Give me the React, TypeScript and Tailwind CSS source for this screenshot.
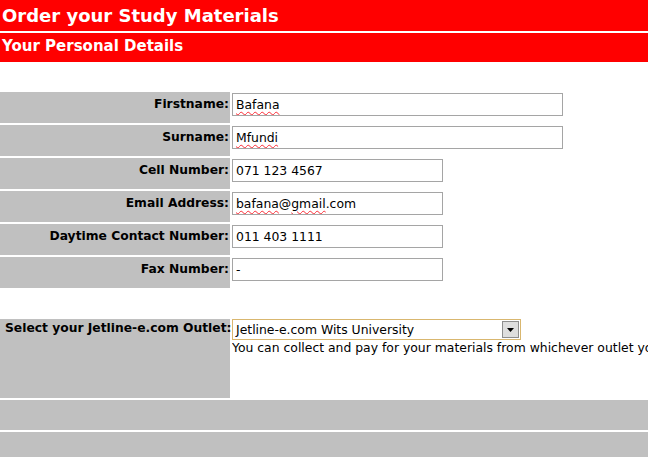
import React from "react";

const font = { fontFamily: '"DejaVu Sans", Verdana, sans-serif' };

function Squiggle({ children }: { children: React.ReactNode }) {
  return (
    <span className="underline decoration-wavy decoration-red-500 decoration-1 underline-offset-2">
      {children}
    </span>
  );
}

function Field({ wide, children }: { wide?: boolean; children: React.ReactNode }) {
  return (
    <div
      className={`h-[23px] ${wide ? "w-[331px]" : "w-[211px]"} border border-[#a5a5a5] bg-white px-[3px] text-[12.4px] leading-[21px] text-black whitespace-nowrap overflow-hidden`}
    >
      {children}
    </div>
  );
}

const rows: { label: string; wide?: boolean; value: React.ReactNode }[] = [
  { label: "Firstname:", wide: true, value: <Squiggle>Bafana</Squiggle> },
  { label: "Surname:", wide: true, value: <Squiggle>Mfundi</Squiggle> },
  { label: "Cell Number:", value: "071 123 4567" },
  {
    label: "Email Address:",
    value: (
      <>
        <Squiggle>bafana</Squiggle>@<Squiggle>gmail</Squiggle>.com
      </>
    ),
  },
  { label: "Daytime Contact Number:", value: "011 403 1111" },
  { label: "Fax Number:", value: "-" },
];

export default function App() {
  return (
    <div className="w-[648px] h-[457px] overflow-hidden bg-white" style={font}>
      <h1 className="h-[31px] bg-[#ff0000] px-[2px] text-[18px] font-bold leading-[31px] text-white whitespace-nowrap">
        Order your Study Materials
      </h1>
      <h2 className="mt-[2px] h-[29px] bg-[#ff0000] px-[2px] text-[15px] font-bold leading-[27px] text-white whitespace-nowrap">
        Your Personal Details
      </h2>

      <div className="mt-[30px] grid grid-cols-[230px_1fr] gap-x-[2px] gap-y-[2px]">
        {rows.map((r) => (
          <React.Fragment key={r.label}>
            <div className="h-[31px] bg-[#c0c0c0] pr-[1px] pt-[5px] text-right text-[12.3px] font-bold leading-[15px] text-black whitespace-nowrap">
              {r.label}
            </div>
            <div className="h-[31px] pt-[1px]">
              <Field wide={r.wide}>{r.value}</Field>
            </div>
          </React.Fragment>
        ))}

        <div className="h-[27px]" />
        <div className="h-[27px]" />

        <div className="h-[79px] bg-[#c0c0c0] pl-[5px] pt-[2px] text-[12.3px] font-bold leading-[15px] text-black whitespace-nowrap">
          Select your Jetline-e.com Outlet:
        </div>
        <div className="h-[79px] overflow-hidden">
          <div className="flex h-[21px] w-[289px] items-center border border-[#d9b76f] bg-white">
            <span className="flex-1 px-[3px] text-[12.4px] leading-[19px] text-black whitespace-nowrap">
              Jetline-e.com Wits University
            </span>
            <span className="mr-[1px] flex h-[17px] w-[17px] items-center justify-center border border-[#8e8e8e] bg-[#dedede]">
              <svg width="7" height="4" viewBox="0 0 7 4">
                <path d="M0 0h7L3.5 4z" fill="#000" />
              </svg>
            </span>
          </div>
          <p className="text-[12.4px] leading-[15px] text-black whitespace-nowrap">
            You can collect and pay for your materials from whichever outlet you prefer.
          </p>
        </div>
      </div>

      <div className="mt-[2px] h-[30px] bg-[#c0c0c0]" />
      <div className="mt-[2px] h-[30px] bg-[#c0c0c0]" />
    </div>
  );
}
